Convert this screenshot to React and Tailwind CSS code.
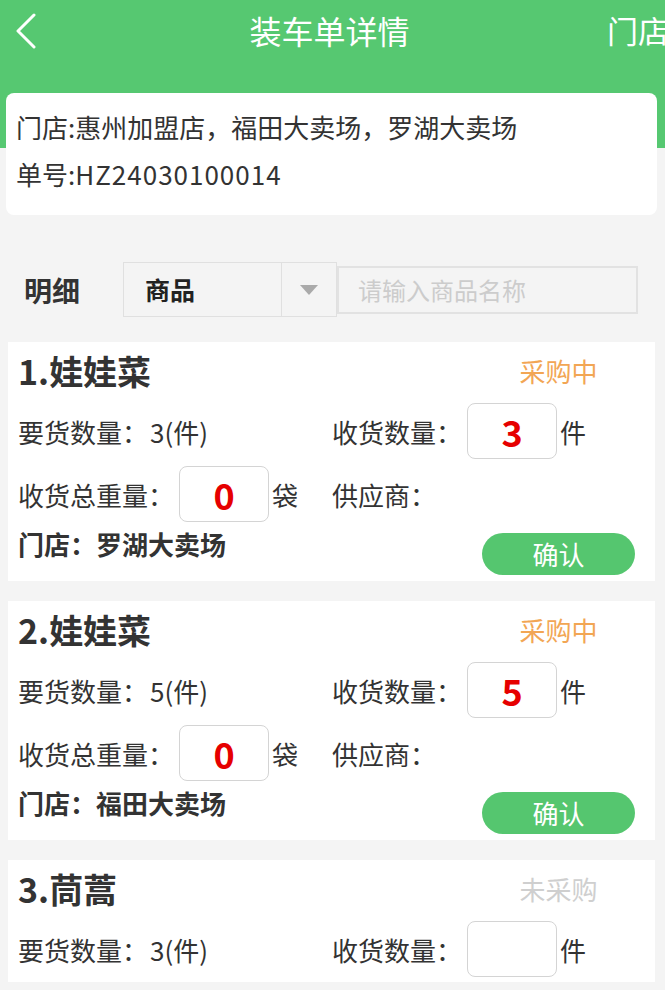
const items = [
  { no: 1, name: '娃娃菜', status: '采购中', qty: 3, got: '3', weight: '0', store: '罗湖大卖场' },
  { no: 2, name: '娃娃菜', status: '采购中', qty: 5, got: '5', weight: '0', store: '福田大卖场' },
  { no: 3, name: '茼蒿', status: '未采购', qty: 3, got: '', weight: '', store: '惠州加盟店' },
];

function NumBox({ value }) {
  return (
    <div className="w-[90px] h-[56px] rounded-[8px] border-[1.5px] border-[#d4d4d4] bg-white flex items-center justify-center text-[36px] font-bold text-[#e60000] leading-none">
      {value}
    </div>
  );
}

function ItemCard({ it }) {
  const pending = it.status === '未采购';
  return (
    <div className="bg-white mx-[8px] w-[647px] pl-[10px] pr-[20px] pt-[8px] pb-[6px] shrink-0">
      <div className="flex items-center justify-between h-[40px]">
        <div className="text-[34px] font-bold text-[#333]">{it.no}.{it.name}</div>
        <div className={`w-[153px] text-center text-[26px] ${pending ? 'text-[#cfcfcf]' : 'text-[#f2a654]'}`}>{it.status}</div>
      </div>
      <div className="flex mt-[13px] h-[56px] items-center">
        <div className="w-[314px] text-[26px] text-[#333]">要货数量：<span className="ml-[2px]">{it.qty}(件)</span></div>
        <div className="flex items-center text-[26px] text-[#333]">
          <span>收货数量：</span>
          <div className="ml-[5px]"><NumBox value={it.got} /></div>
          <span className="ml-[3px]">件</span>
        </div>
      </div>
      <div className="flex mt-[7px] h-[56px] items-center">
        <div className="w-[314px] flex items-center text-[26px] text-[#333]">
          <span>收货总重量：</span>
          <div className="ml-[5px]"><NumBox value={it.weight} /></div>
          <span className="ml-[3px]">袋</span>
        </div>
        <div className="text-[26px] text-[#333]">供应商：</div>
      </div>
      <div className="flex justify-between items-start">
        <div className="mt-[9px] text-[26px] leading-[26px] font-semibold text-[#333]">门店：{it.store}</div>
        <button className="mt-[11px] w-[153px] h-[42px] rounded-full bg-[#55c66f] text-white text-[26px] leading-none">确认</button>
      </div>
    </div>
  );
}

export default function App() {
  return (
    <div className="w-[665px] h-[990px] overflow-hidden bg-[linear-gradient(to_bottom,#56c871_148px,#f4f4f4_148px)] font-['Noto_Sans_CJK_SC','Noto_Sans',sans-serif]">
      <div className="relative h-[60px] flex items-center justify-center">
        <svg className="absolute left-[14px] top-[13px]" width="24" height="36" viewBox="0 0 24 36" fill="none" stroke="white" strokeWidth="3" strokeLinecap="round" strokeLinejoin="round">
          <path d="M20 2 L4 18 L20 34" />
        </svg>
        <div className="ml-[-6px] text-white text-[32px] leading-none">装车单详情</div>
        <div className="absolute left-[607px] top-[14px] text-white text-[31px] leading-none whitespace-nowrap">门店</div>
      </div>

      <div className="ml-[6px] mr-[8px] mt-[33px] bg-white rounded-[8px] px-[10px] pt-[10px] pb-[18px] text-[26px] leading-[47px] text-[#333]">
        <div>门店:惠州加盟店，福田大卖场，罗湖大卖场</div>
        <div>单号:<span className="tracking-[1px]">HZ24030100014</span></div>
      </div>

      <div className="flex items-center mt-[47px] h-[55px]">
        <div className="ml-[24px] w-[99px] text-[28px] font-bold text-[#333]">明细</div>
        <div className="flex w-[214px] h-[55px] border border-[#e0e0e0]">
          <div className="w-[157px] pl-[21px] flex items-center text-[25px] font-bold text-[#222]">商品</div>
          <div className="flex-1 border-l border-[#e0e0e0] flex items-center justify-center">
            <svg width="18" height="10" viewBox="0 0 18 10"><path d="M0 0 L18 0 L9 10 Z" fill="#aaaaaa" /></svg>
          </div>
        </div>
        <div className="w-[301px] h-[48px] border-2 border-[#e2e2e2] flex items-center pl-[19px] text-[24px] text-[#cccccc]">请输入商品名称</div>
      </div>

      <div className="mt-[25px] h-[640px] overflow-hidden flex flex-col gap-[20px]">
        {items.map(it => <ItemCard key={it.no} it={it} />)}
      </div>
    </div>
  );
}
